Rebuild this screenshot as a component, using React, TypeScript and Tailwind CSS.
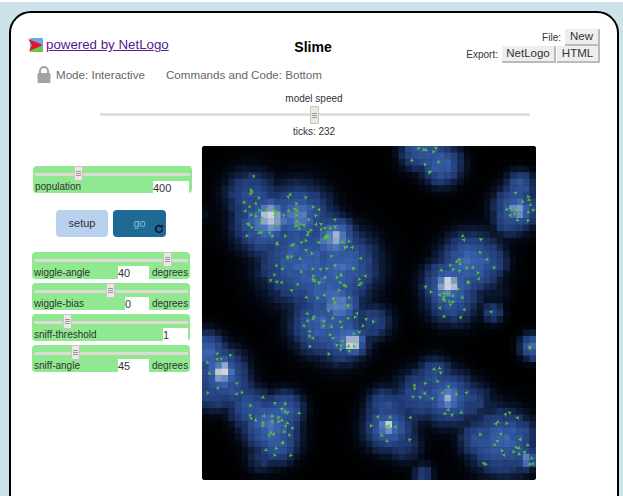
// Slime model page, NetLogo Web layout
const PATCHES = 51;
const PATCH = 334 / PATCHES;

// [x, y, radius, strength] in page pixels, offset by the view origin below
const BLOBS: number[][] = [
  [270, 218, 12, 1.0], [250, 195, 18, 0.42], [300, 215, 22, 0.55], [335, 238, 13, 0.85],
  [345, 265, 24, 0.55], [300, 262, 28, 0.55], [340, 305, 13, 0.72], [352, 342, 9, 1.0],
  [320, 325, 20, 0.55], [375, 322, 13, 0.35], [262, 225, 20, 0.55], [325, 285, 24, 0.5],
  [340, 335, 20, 0.5], [300, 215, 10, 0.72], [418, 152, 13, 0.45], [442, 165, 14, 0.58], [428, 150, 13, 0.45],
  [518, 210, 8, 0.9], [516, 208, 16, 0.55], [520, 185, 10, 0.5], [508, 222, 11, 0.35],
  [470, 262, 20, 0.62], [448, 285, 9, 1.0], [450, 285, 18, 0.58], [490, 262, 13, 0.4], [452, 298, 18, 0.5], [500, 292, 8, 0.14],
  [222, 372, 9, 1.0], [222, 372, 17, 0.58], [206, 350, 13, 0.6], [235, 388, 13, 0.4], [212, 392, 14, 0.4],
  [270, 425, 18, 0.62], [278, 442, 15, 0.5], [250, 408, 15, 0.45], [285, 410, 13, 0.55], [262, 458, 12, 0.25],
  [388, 427, 8, 0.92], [388, 427, 17, 0.55], [385, 405, 13, 0.4], [405, 445, 13, 0.28], [420, 395, 18, 0.42],
  [448, 398, 8, 0.85], [448, 398, 18, 0.58], [435, 375, 13, 0.4], [472, 400, 14, 0.32], [495, 405, 8, 0.16],
  [503, 443, 22, 0.58], [527, 460, 6, 0.85], [480, 440, 14, 0.45], [520, 435, 11, 0.45],
  [423, 474, 8, 0.3], [533, 347, 9, 0.62], [493, 313, 8, 0.35], [203, 215, 8, 0.1],
];

function rng(seed: number) {
  let s = seed;
  return () => {
    s = (s * 1664525 + 1013904223) % 4294967296;
    return s / 4294967296;
  };
}

function heatAt(x: number, y: number) {
  let top = 0;
  let sum = 0;
  for (const [bx, by, r, k] of BLOBS) {
    const dx = x - (bx - 202);
    const dy = y - (by - 146);
    const g = k * Math.exp(-(dx * dx + dy * dy) / (2 * r * r));
    top = Math.max(top, g);
    sum += g;
  }
  return top + (sum - top) * 0.16;
}

function ramp(v: number) {
  const stops = [
    [0, 0, 0, 0],
    [0.08, 3, 8, 18],
    [0.28, 32, 58, 114],
    [0.6, 56, 96, 172],
    [0.8, 100, 135, 192],
    [1, 205, 212, 222],
  ];
  for (let i = 1; i < stops.length; i++) {
    if (v <= stops[i][0]) {
      const a = stops[i - 1];
      const b = stops[i];
      const t = (v - a[0]) / (b[0] - a[0]);
      return `rgb(${Math.round(a[1] + (b[1] - a[1]) * t)},${Math.round(a[2] + (b[2] - a[2]) * t)},${Math.round(a[3] + (b[3] - a[3]) * t)})`;
    }
  }
  return 'rgb(205,212,222)';
}

const noise = rng(7);
const CELLS: { x: number; y: number; fill: string }[] = [];
for (let row = 0; row < PATCHES; row++) {
  for (let col = 0; col < PATCHES; col++) {
    const h = heatAt((col + 0.5) * PATCH, (row + 0.5) * PATCH);
    const v = Math.min(1, h * (h > 0.12 ? 0.86 + noise() * 0.2 : 1));
    CELLS.push({ x: col * PATCH, y: row * PATCH, fill: ramp(v) });
  }
}

const pick = rng(41);
const TURTLES: { x: number; y: number; a: number }[] = [];
for (let i = 0; i < 20000 && TURTLES.length < 320; i++) {
  const x = pick() * 334;
  const y = pick() * 334;
  const a = pick() * 360;
  if (heatAt(x, y) > 0.22 + pick() * 0.3) TURTLES.push({ x, y, a });
}

const SLIDERS = [
  { label: 'wiggle-angle', value: '40', unit: 'degrees', thumb: 'left-[131px]', box: 'w-[31px]' },
  { label: 'wiggle-bias', value: '0', unit: 'degrees', thumb: 'left-[74px]', box: 'w-[24px]' },
  { label: 'sniff-threshold', value: '1', unit: '', thumb: 'left-[31px]', box: 'w-[25px]' },
  { label: 'sniff-angle', value: '45', unit: 'degrees', thumb: 'left-[39px]', box: 'w-[31px]' },
];

function Thumb({ className }: { className: string }) {
  return (
    <div
      className={`absolute top-0 flex h-[15px] w-[9px] flex-col items-center justify-center gap-px rounded-[1px] border border-[#c5c5c5] bg-[#ece8e2] ${className}`}
    >
      <span className="h-px w-[5px] bg-[#999]" />
      <span className="h-px w-[5px] bg-[#999]" />
      <span className="h-px w-[5px] bg-[#999]" />
    </div>
  );
}

function Slider({ label, value, unit, thumb, box }: (typeof SLIDERS)[number]) {
  return (
    <div className="relative flex h-[27px] w-[158px] flex-col justify-between rounded-[4px] bg-[#90e890] pt-[7px]">
      <div className="mx-[2px] h-[3px] bg-[#dfdbd4]" />
      <Thumb className={thumb} />
      <div className="flex h-[13px] items-end pl-[2px] pr-[2px] text-[10px] leading-[12px] text-[#333]">
        <span className="flex-1">{label}</span>
        <span className={`h-[13px] bg-white text-[11px] leading-[14px] text-[#333] ${box}`}>{value}</span>
        {unit && <span className="ml-[3px] w-[36px] text-right text-[10px] leading-[12px]">{unit}</span>}
      </div>
    </div>
  );
}

function Logo() {
  return (
    <svg width="16" height="16" viewBox="0 0 16 16" className="shrink-0">
      <rect x="2" y="1" width="13" height="9" rx="1" fill="#6aa8e0" />
      <rect x="2" y="10" width="13" height="5" fill="#6cc24a" />
      <path d="M0 2 L15 8 L1 14 L4 8 Z" fill="#e8112d" />
    </svg>
  );
}

function Lock() {
  return (
    <svg width="14" height="17" viewBox="0 0 14 17">
      <path d="M3 7V5a4 4 0 0 1 8 0v2" fill="none" stroke="#a3a3a3" strokeWidth="2" />
      <rect x="0.5" y="7" width="13" height="10" rx="1" fill="#a3a3a3" />
    </svg>
  );
}

export default function App() {
  return (
    <div className="h-[496px] w-[623px] overflow-hidden border-t-2 border-white bg-[#cde3ea] font-['Liberation_Sans',Arial,sans-serif]">
      <div className="ml-[9px] mt-[9px] h-[520px] w-[610px] rounded-t-[22px] border-2 border-black bg-white">
        {/* Header */}
        <div className="flex h-[53px] pl-[17px] pr-[17px] pt-[23px]">
          <a href="#" className="flex h-[18px] w-[185px] items-center text-[13.3px] text-[#551a8b] underline">
            <Logo />
            <span className="ml-[2px]">powered by NetLogo</span>
          </a>
          <div className="w-[200px] pt-[2px] text-center text-[14px] font-bold leading-[18px] text-black">Slime</div>
          <div className="-mt-[7px] flex flex-1 flex-col items-end text-[10px] text-[#333]">
            <div className="flex items-center gap-[4px]">
              <span>File:</span>
              <button className="h-[17px] w-[35px] border-r-2 border-b-2 border-[#bbb] bg-[#eee] text-[11.5px] leading-none">New</button>
            </div>
            <div className="flex items-center gap-[1px]">
              <span className="mr-[3px]">Export:</span>
              <button className="h-[17px] w-[54px] border-r-2 border-b-2 border-[#bbb] bg-[#eee] text-[11.5px] leading-none">NetLogo</button>
              <button className="h-[17px] w-[43px] border-r-2 border-b-2 border-[#bbb] bg-[#eee] text-[11.5px] leading-none">HTML</button>
            </div>
          </div>
        </div>

        <div className="flex h-[17px] items-center pl-[26px] text-[11.6px] text-[#666]">
          <Lock />
          <span className="ml-[5px] w-[110px]">Mode: Interactive</span>
          <span>Commands and Code: Bottom</span>
        </div>

        {/* Speed */}
        <div className="mt-[10px] text-center text-[10px] leading-[12px] text-[#333]">
          <div className="w-[606px]">model speed</div>
          <div className="relative ml-[89px] mt-[1px] h-[18px] w-[430px] pt-[7px]">
            <div className="h-[3px] bg-[#e4dfd9]" />
            <Thumb className="left-[210px] h-[18px]" />
          </div>
          <div className="mt-[2px] w-[606px]">ticks: 232</div>
        </div>

        {/* Widgets and view */}
        <div className="mt-[8px] flex">
          <div className="ml-[21px] w-[170px] pt-[20px]">
            <div className="relative ml-px flex h-[27px] w-[159px] flex-col justify-between rounded-[4px] bg-[#90e890] pt-[7px]">
              <div className="mx-[2px] h-[3px] bg-[#dfdbd4]" />
              <Thumb className="left-[41px]" />
              <div className="flex h-[12px] items-end pl-[2px] pr-[3px] text-[10px] leading-[12px] text-[#333]">
                <span className="flex-1">population</span>
                <span className="h-[12px] w-[36px] bg-white text-[11px] leading-[14px]">400</span>
              </div>
            </div>

            <div className="ml-[24px] mt-[17px] flex gap-[5px]">
              <button className="h-[27px] w-[52px] rounded-[4px] bg-[#b9d0ef] text-[11px] text-[#333]">setup</button>
              <button className="relative h-[27px] w-[53px] rounded-[4px] bg-[#1f6a94] text-[11px] text-[#8fbbdc]">
                go
                <svg width="10" height="10" viewBox="0 0 24 24" className="absolute bottom-[3px] right-[2px]" fill="none" stroke="#0c1a24" strokeWidth="4">
                  <path d="M20 12a8 8 0 1 1-3-6.2" />
                  <path d="M21 2v6h-6" fill="#0c1a24" strokeWidth="2" />
                </svg>
              </button>
            </div>

            <div className="mt-[15px] flex flex-col gap-[4px]">
              {SLIDERS.map((s) => (
                <Slider key={s.label} {...s} />
              ))}
            </div>
          </div>

          <div className="h-[334px] w-[334px] overflow-hidden rounded-[3px] bg-black">
            <svg width="334" height="334" viewBox="0 0 334 334" className="block blur-[0.5px]">
              {CELLS.map((c) => (
                <rect key={`${c.x}-${c.y}`} x={c.x} y={c.y} width={PATCH + 0.4} height={PATCH + 0.4} fill={c.fill} />
              ))}
              {TURTLES.map((t, i) => (
                <path
                  key={i}
                  d="M0 -2.2 L1.9 1.7 L0 0.9 L-1.9 1.7 Z"
                  fill="#58c03a"
                  transform={`translate(${t.x} ${t.y}) rotate(${t.a})`}
                />
              ))}
            </svg>
          </div>
        </div>
      </div>
    </div>
  );
}
